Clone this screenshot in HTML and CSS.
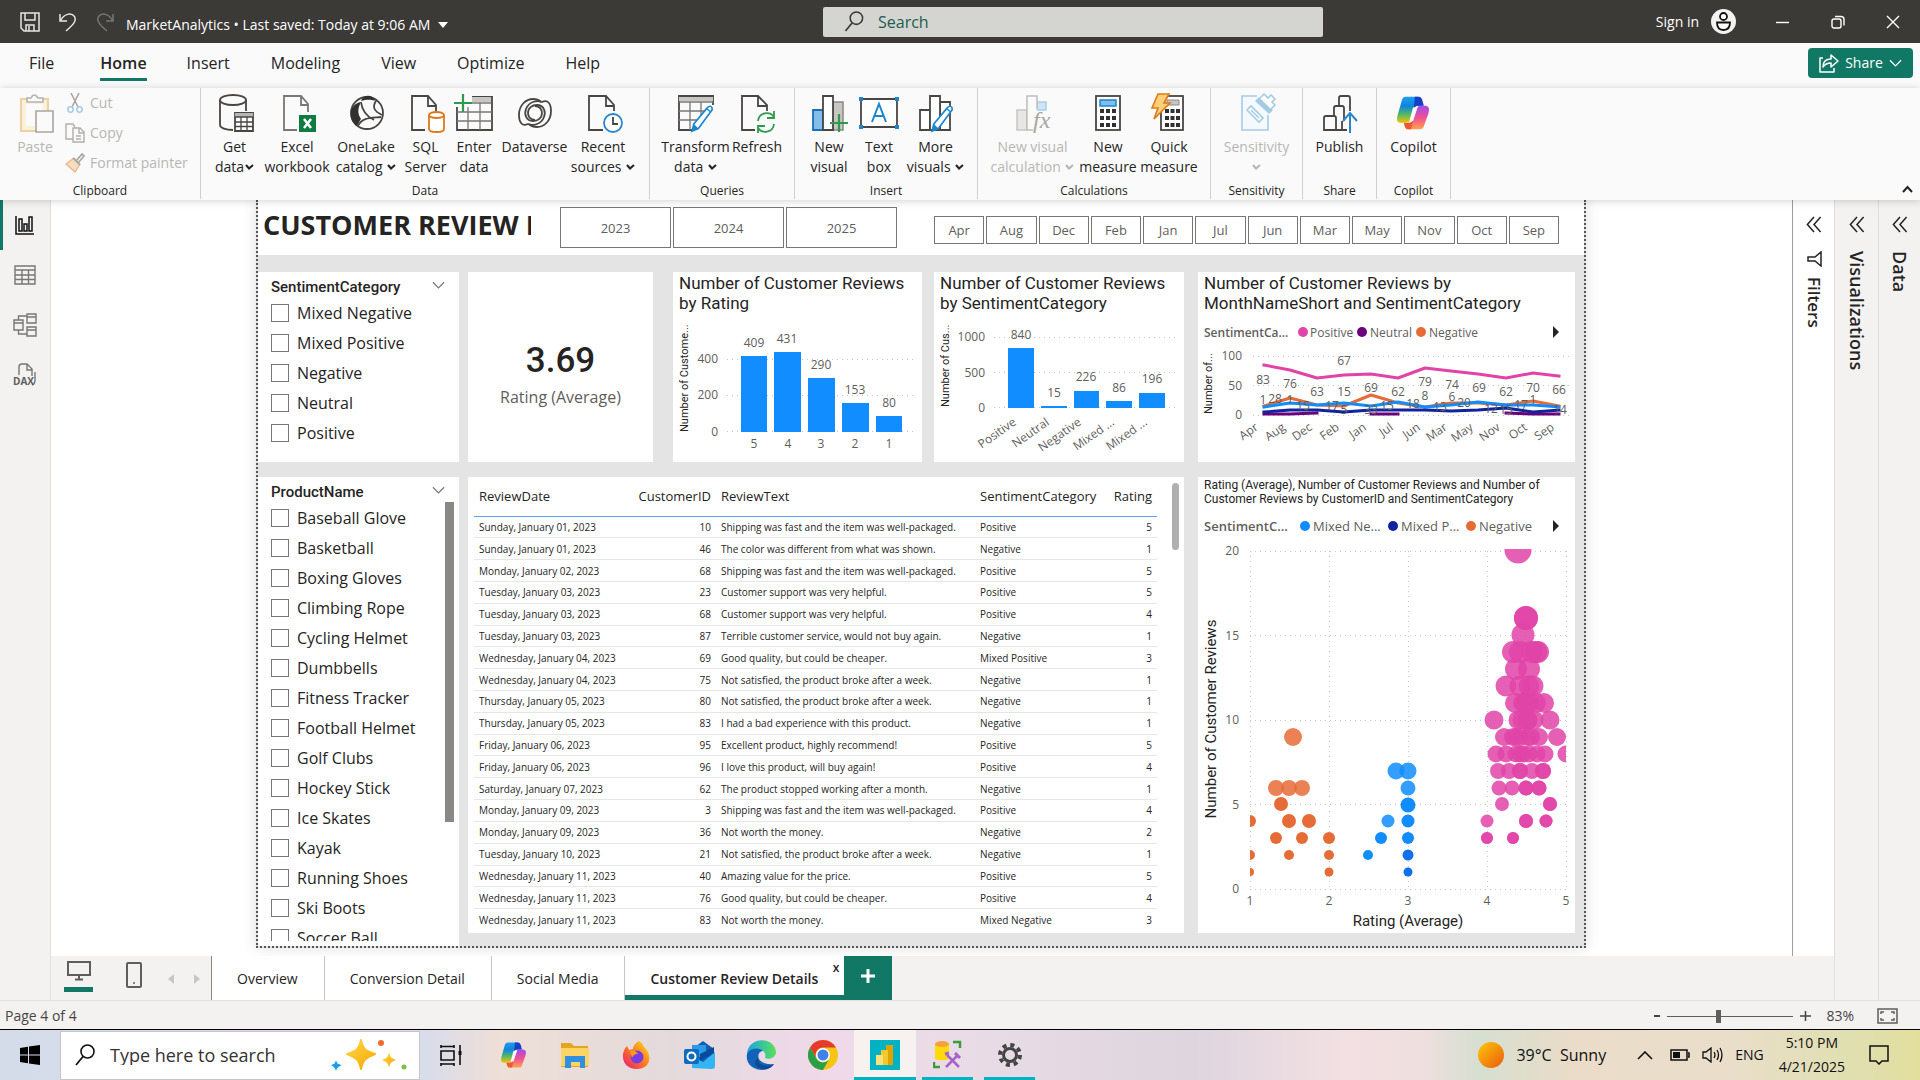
FILE: index.html
```html
<!DOCTYPE html>
<html lang="en">
<head>
<meta charset="utf-8">
<title>MarketAnalytics - Power BI Desktop</title>
<link rel="stylesheet" href="styles.css">
</head>
<body>
<svg class="defs" aria-hidden="true">
  <defs>
    <linearGradient id="cpA" x1="0" y1="0" x2="0" y2="1"><stop offset="0" stop-color="#1ba0ee"/><stop offset=".35" stop-color="#1183e0"/><stop offset=".65" stop-color="#4bb56c"/><stop offset="1" stop-color="#f5c40a"/></linearGradient>
    <linearGradient id="cpB" x1="0" y1="0" x2="0" y2="1"><stop offset="0" stop-color="#a24bee"/><stop offset=".5" stop-color="#ee5093"/><stop offset="1" stop-color="#ffa24d"/></linearGradient>
    <linearGradient id="sunG" x1="0" y1="0" x2="1" y2="1"><stop offset="0" stop-color="#ffc80a"/><stop offset="1" stop-color="#ea5a0c"/></linearGradient>
    <linearGradient id="foxG" x1="1" y1="0" x2="0" y2="1"><stop offset="0" stop-color="#ffe226"/><stop offset=".5" stop-color="#ff7a1c"/><stop offset="1" stop-color="#e6127e"/></linearGradient>
    <linearGradient id="edgeG" x1="0" y1="0" x2="1" y2="0"><stop offset="0" stop-color="#1aa5e3"/><stop offset="1" stop-color="#5be05a"/></linearGradient>
    <linearGradient id="starG" x1="0" y1="0" x2="1" y2="1"><stop offset="0" stop-color="#ffd84a"/><stop offset="1" stop-color="#f5a800"/></linearGradient>
    <symbol id="copilot" viewBox="0 0 40 40">
      <path d="M12 2h13c3 0 4 2 5 6l1 4h-5c-4 0-5 2-6 6l-2 7c-1 4-2 6-6 6H7c-4 0-6-2-4-9l4-14c1-4 2-6 5-6z" fill="url(#cpA)"/>
      <path d="M22 2h4c3 0 4 2 5 6l1 4h-6c-3 0-4 1-5 3z" fill="#1540c4"/>
      <path d="M28 38H15c-3 0-4-2-5-7h5c4 0 5-3 6-6l3-9c1-3 2-4 5-4h4c4 0 6 2 4 9l-4 11c-1 4-2 6-5 6z" fill="url(#cpB)"/>
      <path d="M18 38h-3c-3 0-4-2-5-7h5c2 0 4-1 5-3z" fill="#ee5a30"/>
      <path d="M20 14l-4 15h4l5-15z" fill="#fafafa"/>
    </symbol>
    <symbol id="caret" viewBox="0 0 9 6"><path d="M1 1l3 3.500L8 1" fill="none" stroke="currentColor" stroke-width="2"/></symbol>
    <symbol id="chev" viewBox="0 0 14 9"><path d="M1 1l6 6 6-6" fill="none" stroke="currentColor" stroke-width="1.300"/></symbol>
    <symbol id="collapse" viewBox="0 0 16 18"><path d="M8 1L1 9l7 8M15 1L8 9l7 8" fill="none" stroke="currentColor" stroke-width="1.600"/></symbol>
    <symbol id="pencil" viewBox="0 0 26 32"><path d="M2 30l2-8L19 4q3-3 5 0 1 2-1 4L9 27z" fill="#fff" stroke="#1a86d0" stroke-width="1.800"/><path d="M2 30l2-8 5 5z" fill="#1a86d0"/><path d="M18 5l5 4" stroke="#1a86d0" stroke-width="1.500"/></symbol>
    <symbol id="lens" viewBox="0 0 20 22"><circle cx="12.500" cy="7.500" r="6.500" fill="none" stroke="currentColor" stroke-width="1.600"/><path d="M8 12.500L1 21" stroke="currentColor" stroke-width="1.800"/></symbol>
  </defs>
</svg>

<header class="titlebar">
  <div class="quick">
    <button aria-label="Save"><svg width="20" height="20" viewBox="0 0 20 20"><path d="M1 1h18v18H4l-3-3zM5 1v7h10V1M6 19v-6h8v6M9 14v5" class="ln"/></svg></button>
    <button aria-label="Undo"><svg width="18" height="20" viewBox="0 0 18 20"><path d="M1 2v7h7M1.500 8.500C5 2 12 0 15.500 4.500 18 9 14 13 7 19" class="ln"/></svg></button>
    <button aria-label="Redo" class="dim"><svg width="18" height="20" viewBox="0 0 18 20"><path d="M17 2v7h-7M16.500 8.500C13 2 6 0 2.500 4.500 0 9 4 13 11 19" class="ln"/></svg></button>
  </div>
  <button class="doc">MarketAnalytics • Last saved: Today at 9:06 AM <svg width="10" height="6" viewBox="0 0 10 6"><path d="M0 0h10L5 6z" fill="#fff"/></svg></button>
  <label class="search"><svg width="22" height="21"><use href="#lens"/></svg><input type="text" placeholder="Search" aria-label="Search"></label>
  <div class="account">
    <button>Sign in</button>
    <svg width="25" height="25" viewBox="0 0 25 25"><circle cx="12.500" cy="12.500" r="12.500" fill="#f3f2f1"/><circle cx="12.500" cy="7.500" r="3.500" class="av"/><path d="M6 13.500h13q0 7.500-6.500 7.500T6 13.500z" class="av"/></svg>
  </div>
  <div class="wincontrols">
    <button aria-label="Minimize"><svg width="14" height="14"><path d="M0 7.500h13" class="wc"/></svg></button>
    <button aria-label="Restore"><svg width="14" height="14" viewBox="0 0 14 14"><rect x="1" y="4" width="9" height="9" rx="2" class="wc"/><path d="M4 1.500h6q3 0 3 3v6" class="wc"/></svg></button>
    <button aria-label="Close"><svg width="14" height="14"><path d="M1 1l12 12M13 1L1 13" class="wc"/></svg></button>
  </div>
</header>

<nav class="menu">
  <a href="#">File</a><a href="#" class="on">Home</a><a href="#">Insert</a><a href="#">Modeling</a><a href="#">View</a><a href="#">Optimize</a><a href="#">Help</a>
  <button class="share"><svg width="20" height="20" viewBox="0 0 20 20"><path d="M4 5H1v14h14v-4M4 14c0-6 3-8 8-8V2l7 6-7 6v-4c-4 0-6 1-8 4z" fill="none" stroke="#fff" stroke-width="1.500" stroke-linejoin="round"/></svg>Share<svg width="13" height="9"><use href="#chev"/></svg></button>
</nav>

<section class="ribbon">
  <div class="group clip">
    <div class="tools">
      <button class="tool dis"><svg width="40" height="40" viewBox="0 0 40 40"><path d="M6 6h27v32H6z" fill="#fbf0d8" stroke="#eed0a5" stroke-width="2"/><path d="M11 11h17v22H11z" fill="#fafafa"/><path d="M12 9V5h4q3-6 7 0h5v4z" fill="#fafafa" stroke="#b5b3b1" stroke-width="1.600"/><path d="M21 18h17v21H21z" fill="#fafafa" stroke="#a8a6a4" stroke-width="1.600"/></svg><span>Paste</span></button>
      <div class="cliplist">
        <button class="mini"><svg width="20" height="20" viewBox="0 0 20 20"><path d="M6 0l7 14M14 0L7 14" stroke="#a5a3a1" stroke-width="1.500"/><circle cx="5.500" cy="16.500" r="2.700" class="sc"/><circle cx="14.500" cy="16.500" r="2.700" class="sc"/></svg>Cut</button>
        <button class="mini"><svg width="20" height="20" viewBox="0 0 20 20"><path d="M8 16H1V1h7l2 3M8 5h7l4 4v10H8zM14 5v5h5M11 13h5M11 16h5" fill="none" stroke="#b0aeac" stroke-width="1.400"/></svg>Copy</button>
        <button class="mini"><svg width="20" height="20" viewBox="0 0 20 20"><path d="M1 11l8-6 6 6-5 8z" fill="#f8dcc0" stroke="#e9b48a" stroke-width="1.300"/><path d="M8 5l7 7M11 8l6-7 2 2-6 7" fill="none" stroke="#a5a3a1" stroke-width="1.600"/></svg>Format painter</button>
      </div>
    </div>
    <h2>Clipboard</h2>
  </div>

  <div class="group data">
    <div class="tools">
      <button class="tool"><svg width="40" height="40" viewBox="0 0 40 40"><path d="M5 7v25c0 3 6 5 13 5M31 18V7" class="ic"/><ellipse cx="18" cy="7" rx="13" ry="5" class="ic"/><path d="M20 20h18v18H20z" fill="#fff" class="ic"/><path d="M20 20h18v4H20z" fill="#b8b6b4"/><path d="M20 24h18M20 29h18M20 33.500h18M26 24v14M32 24v14" class="ic thin"/></svg><span>Get<br>data<svg class="ct"><use href="#caret"/></svg></span></button>
      <button class="tool"><svg width="40" height="40" viewBox="0 0 40 40"><path d="M20 37H7V3h17l7 8v8M24 3v9h7" class="ic lt"/><rect x="22" y="22" width="17" height="17" fill="#107c41"/><path d="M27 26l7 9M34 26l-7 9" stroke="#fff" stroke-width="2.500"/></svg><span>Excel<br>workbook</span></button>
      <button class="tool"><svg width="40" height="40" viewBox="0 0 40 40"><circle cx="21" cy="20" r="16" class="ic"/><path d="M15 9C2 11 2 28 11 33c2-3 3-6 4-7-4-6-3-11 0-17zM15 8c2-7 12-7 14 0-6-2-9-1-14 0z" fill="#323130"/><path d="M15 9c1 9 5 14 13 18M30 8c-4 6-2 10 6 14M12 33c4-9 13-8 23-9" class="ic"/></svg><span>OneLake<br>catalog <svg class="ct"><use href="#caret"/></svg></span></button>
      <button class="tool"><svg width="40" height="40" viewBox="0 0 40 40"><path d="M19 37H6V3h16l8 9v6M22 3v10h8" class="ic"/><path d="M23 22v14c0 4 15 4 15 0V22" fill="#fff" stroke="#e07818" stroke-width="1.800"/><ellipse cx="30.500" cy="22" rx="7.500" ry="3" fill="#fff" stroke="#e07818" stroke-width="1.800"/></svg><span>SQL<br>Server</span></button>
      <button class="tool"><svg width="40" height="40" viewBox="0 0 40 40"><path d="M18 4h20v33H3V14" class="ic"/><path d="M18 4h19v5H18z" fill="#c8c6c4"/><path d="M18 10h19M3 19h35M3 28h35M14 14v23M26 10v27" class="ic lt thin"/><path d="M9 1v18M0 10h18" stroke="#2e9a4a" stroke-width="2.200"/></svg><span>Enter<br>data</span></button>
      <button class="tool"><svg width="40" height="40" viewBox="0 0 40 40"><path d="M20 27c-5 0-7-4-7-7 0-5 4-8 9-8 7 0 9 7 7 12-3 8-12 9-16 7-6 3-9-2-9-9C4 12 11 6 18 6c5 0 7 2 8 3" class="ic"/><path d="M20 13c5 0 7 4 7 7 0 5-4 8-9 8-7 0-9-7-7-12 3-8 12-9 16-7 6-3 9 2 9 9 0 10-7 16-14 16-5 0-7-2-8-3" class="ic"/></svg><span>Dataverse</span></button>
      <button class="tool"><svg width="40" height="40" viewBox="0 0 40 40"><path d="M20 37H6V3h17l8 9v6M23 3v10h8" class="ic"/><circle cx="30" cy="30" r="9" fill="#fff" stroke="#2a86c8" stroke-width="1.800"/><path d="M30 24v7h5" class="ic"/></svg><span>Recent<br>sources <svg class="ct"><use href="#caret"/></svg></span></button>
    </div>
    <h2>Data</h2>
  </div>

  <div class="group queries">
    <div class="tools">
      <button class="tool"><svg width="40" height="40" viewBox="0 0 40 40"><path d="M37 12V3H3v34h16" class="ic"/><path d="M3 4h34v4H3z" fill="#c8c6c4"/><path d="M3 9h34M3 18h28M3 27h20M14 9v28M25 9v14" class="ic lt thin"/><svg x="13" y="11" width="26" height="29"><use href="#pencil"/></svg></svg><span>Transform<br>data <svg class="ct"><use href="#caret"/></svg></span></button>
      <button class="tool"><svg width="40" height="40" viewBox="0 0 40 40"><path d="M18 37H5V3h16l9 9v6M21 3v10h9" class="ic"/><path d="M21 28c1-9 12-10 16-4M37 18v7h-7M37 31c-1 9-12 10-16 4M21 40v-7h7" fill="none" stroke="#2e9a4a" stroke-width="1.800"/></svg><span>Refresh</span></button>
    </div>
    <h2>Queries</h2>
  </div>

  <div class="group insert">
    <div class="tools">
      <button class="tool"><svg width="40" height="40" viewBox="0 0 40 40"><path d="M4 17h10v20H4z" fill="#83bdec" stroke="#1a6fb5" stroke-width="1.800"/><path d="M24 9h10v28H24z" fill="#c8c6c4" stroke="#8a8886" stroke-width="1.500"/><path d="M14 3h10v34H14z" fill="#fff" class="ic"/><path d="M30 21v18M21 30h18" stroke="#2e9a4a" stroke-width="2.200"/></svg><span>New<br>visual</span></button>
      <button class="tool"><svg width="40" height="40" viewBox="0 0 40 40"><path d="M2 6h36v28H2z" fill="#fff" class="ic"/><path d="M0 4h4v4H0zM36 4h4v4h-4zM0 32h4v4H0zM36 32h4v4h-4z" fill="#1a86d0"/><path d="M13 29l7-18 7 18M15.500 23h9" fill="none" stroke="#1a86d0" stroke-width="2"/></svg><span>Text<br>box</span></button>
      <button class="tool"><svg width="40" height="40" viewBox="0 0 40 40"><path d="M4 17h10v20H4zM24 9h10v28H24z" fill="#fff" class="ic"/><path d="M14 3h10v34H14z" fill="#fff" class="ic"/><svg x="13" y="11" width="26" height="29"><use href="#pencil"/></svg></svg><span>More<br>visuals <svg class="ct"><use href="#caret"/></svg></span></button>
    </div>
    <h2>Insert</h2>
  </div>

  <div class="group calc">
    <div class="tools">
      <button class="tool dis"><svg width="40" height="40" viewBox="0 0 40 40"><path d="M4 17h10v20H4z" fill="#e8e6e4" stroke="#c8c6c4" stroke-width="1.500"/><path d="M24 9h9v8h-9z" fill="#cfe4f6" stroke="#a8cdea" stroke-width="1.500"/><path d="M24 16V3H14v34h6" fill="#fafafa" stroke="#c0bebc" stroke-width="1.500"/><text x="20" y="35" class="fx">fx</text></svg><span>New visual<br>calculation <svg class="ct"><use href="#caret"/></svg></span></button>
      <button class="tool"><svg width="40" height="40" viewBox="0 0 40 40"><rect x="8" y="3" width="24" height="34" fill="#fff" class="ic"/><path d="M12 7h16v6H12z" fill="#83bdec" stroke="#1a86d0" stroke-width="1.500"/><path d="M12 18h16M12 25h16M12 32h16" stroke="#323130" stroke-width="4" stroke-dasharray="4 2"/></svg><span>New<br>measure</span></button>
      <button class="tool"><svg width="40" height="40" viewBox="0 0 40 40"><rect x="12" y="3" width="22" height="34" fill="#fff" class="ic"/><path d="M18 7h12v5H18z" fill="#c8c6c4" stroke="#8a8886"/><path d="M16 18h15M16 25h15M16 32h15" stroke="#323130" stroke-width="4" stroke-dasharray="4 1.500"/><path d="M9 1h11l-5 9h6L5 26l4-11H3z" fill="#fcd078" stroke="#e07818" stroke-width="1.600"/></svg><span>Quick<br>measure</span></button>
    </div>
    <h2>Calculations</h2>
  </div>

  <div class="group sens">
    <div class="tools">
      <button class="tool dis"><svg width="40" height="40" viewBox="0 0 40 40"><path d="M20 3H5v34h26V22" fill="#f4f9fd" stroke="#a5cbe4" stroke-width="1.600"/><path d="M10 17l4-4 12 12-4 4zM14 17l8 8" fill="#fff" stroke="#a5cbe4" stroke-width="1.600"/><path d="M18 8l4-4 14 13-4 4z" fill="#a5cbe4"/><path d="M23 5l4-4 4 4 3-3 4 4-3 3 3 3-4 4" fill="#fff" stroke="#a5cbe4" stroke-width="1.600"/></svg><span>Sensitivity<br><svg class="ct"><use href="#caret"/></svg></span></button>
    </div>
    <h2>Sensitivity</h2>
  </div>
  <div class="group pub">
    <div class="tools">
      <button class="tool"><svg width="40" height="40" viewBox="0 0 40 40"><path d="M30 18V5q0-2-2-2h-7q-2 0-2 2v8M24 28V15q0-2-2-2h-6q-2 0-2 2v8M4 37V25q0-2 2-2h8q2 0 2 2v12zM4 37h23M22 37v-9" class="ic"/><path d="M30 40V21M23 28l7-8 7 8" fill="none" stroke="#2a86c8" stroke-width="2"/></svg><span>Publish</span></button>
    </div>
    <h2>Share</h2>
  </div>
  <div class="group pub">
    <div class="tools"><button class="tool"><svg width="40" height="40" viewBox="0 0 40 40"><svg x="0" y="2" width="38" height="36"><use href="#copilot"/></svg></svg><span>Copilot</span></button></div>
    <h2>Copilot</h2>
  </div>
  <button class="fold" aria-label="Collapse ribbon"><svg width="11" height="8" viewBox="0 0 11 8"><path d="M1 7l4.500-5L10 7" fill="none" stroke="#222" stroke-width="2"/></svg></button>
</section>

<main class="work">
  <nav class="rail">
    <button class="on" aria-label="Report view"><svg width="20" height="20" viewBox="0 0 20 20"><path d="M1 1v18h18M4 4h3v12H4zM9 9h3v7H9zM14 2h3v14h-3z" fill="none" stroke="#111" stroke-width="1.500"/></svg></button>
    <button aria-label="Table view"><svg width="22" height="20" viewBox="0 0 22 20"><path d="M1 1h20v18H1zM1 5h20M1 10h20M1 14.500h20M8 5v14M14.500 5v14" class="rl"/></svg></button>
    <button aria-label="Model view"><svg width="24" height="24" viewBox="0 0 24 24"><path d="M1 7h9v10H1zM1 10h9M14 1h9v9h-9zM14 4h9M14 14h9v9h-9zM14 17h9M5.500 7V3H14M5.500 17v4H14" class="rl"/></svg></button>
    <button aria-label="DAX query view"><svg width="24" height="24" viewBox="0 0 24 24"><path d="M6 12V4q0-3 3-3h5l5 5v7M14 1v6h5M22 9v8q0 4-3 5" class="rl"/><text x="0" y="22" class="dax">DAX</text></svg></button>
  </nav>

  <div class="center">
    <div class="stage">
      <section class="canvas">
        <article class="page">
          <header class="pagehead">
            <h1>CUSTOMER REVIEW DETAILS</h1>
            <div class="years"><button>2023</button><button>2024</button><button>2025</button></div>
            <div class="months"><button>Apr</button><button>Aug</button><button>Dec</button><button>Feb</button><button>Jan</button><button>Jul</button><button>Jun</button><button>Mar</button><button>May</button><button>Nov</button><button>Oct</button><button>Sep</button></div>
          </header>
          <div class="grid">
            <div class="col first">
              <section class="card slicer top">
                <h3>SentimentCategory<svg width="13" height="9"><use href="#chev"/></svg></h3>
                <div class="items">
                  <label><input type="checkbox">Mixed Negative</label>
                  <label><input type="checkbox">Mixed Positive</label>
                  <label><input type="checkbox">Negative</label>
                  <label><input type="checkbox">Neutral</label>
                  <label><input type="checkbox">Positive</label>
                </div>
              </section>
              <section class="card slicer rest">
                <h3>ProductName<svg width="13" height="9"><use href="#chev"/></svg></h3>
                <div class="scroll">
                  <div class="items">
                    <label><input type="checkbox">Baseball Glove</label>
                    <label><input type="checkbox">Basketball</label>
                    <label><input type="checkbox">Boxing Gloves</label>
                    <label><input type="checkbox">Climbing Rope</label>
                    <label><input type="checkbox">Cycling Helmet</label>
                    <label><input type="checkbox">Dumbbells</label>
                    <label><input type="checkbox">Fitness Tracker</label>
                    <label><input type="checkbox">Football Helmet</label>
                    <label><input type="checkbox">Golf Clubs</label>
                    <label><input type="checkbox">Hockey Stick</label>
                    <label><input type="checkbox">Ice Skates</label>
                    <label><input type="checkbox">Kayak</label>
                    <label><input type="checkbox">Running Shoes</label>
                    <label><input type="checkbox">Ski Boots</label>
                    <label><input type="checkbox">Soccer Ball</label>
                  </div>
                  <div class="thumb"></div>
                </div>
              </section>
            </div>

            <div class="col mid">
              <div class="toprow">
                <section class="card kpi"><strong>3.69</strong><span>Rating (Average)</span></section>
                <section class="card">
                  <h4>Number of Customer Reviews<br>by Rating</h4>
                  <svg class="chart" viewBox="0 45 249 145">
                    <path d="M54 87.500h190M54 123.500h190M54 159.500h190" class="gl"/>
                    <g class="bar"><path d="M68 84h26v76H68z"/><path d="M101 80h27v80h-27z"/><path d="M135 106h27v54h-27z"/><path d="M169 131h27v29h-27z"/><path d="M203 144h26v16h-26z"/></g>
                    <g class="tk end"><text x="45" y="91">400</text><text x="45" y="127">200</text><text x="45" y="164">0</text></g>
                    <g class="tk mdl"><text x="81" y="75">409</text><text x="114" y="71">431</text><text x="148" y="97">290</text><text x="182" y="122">153</text><text x="216" y="135">80</text>
                    <text x="81" y="176">5</text><text x="115" y="176">4</text><text x="148" y="176">3</text><text x="182" y="176">2</text><text x="216" y="176">1</text></g>
                    <text class="at sm" transform="translate(15 160) rotate(-90)">Number of Custome...</text>
                  </svg>
                </section>
                <section class="card">
                  <h4>Number of Customer Reviews<br>by SentimentCategory</h4>
                  <svg class="chart" viewBox="0 45 250 145">
                    <path d="M60 65.500h184M60 100.500h184M60 135.500h184" class="gl"/>
                    <g class="bar"><path d="M74 76h26v60H74z"/><path d="M107 134h26v2h-26z"/><path d="M140 119h25v17h-25z"/><path d="M172 129h26v7h-26z"/><path d="M205 121h26v15h-26z"/></g>
                    <g class="tk end"><text x="51" y="69">1000</text><text x="51" y="105">500</text><text x="51" y="140">0</text></g>
                    <g class="tk mdl"><text x="87" y="67">840</text><text x="120" y="125">15</text><text x="152" y="109">226</text><text x="185" y="120">86</text><text x="218" y="111">196</text></g>
                    <g class="tk end"><text transform="translate(83 152) rotate(-35)">Positive</text><text transform="translate(116 152) rotate(-35)">Neutral</text><text transform="translate(148 152) rotate(-35)">Negative</text><text transform="translate(181 152) rotate(-35)">Mixed ...</text><text transform="translate(214 152) rotate(-35)">Mixed ...</text></g>
                    <text class="at sm" transform="translate(15 135) rotate(-90)">Number of Cus...</text>
                  </svg>
                </section>
              </div>
              <section class="card tablecard">
                <table>
                  <thead><tr><th>ReviewDate</th><th class="n">CustomerID</th><th>ReviewText</th><th>SentimentCategory</th><th class="n">Rating</th></tr></thead>
                  <tbody>
                    <tr><td>Sunday, January 01, 2023</td><td>10</td><td>Shipping was fast and the item was well-packaged.</td><td>Positive</td><td>5</td></tr>
                    <tr><td>Sunday, January 01, 2023</td><td>46</td><td>The color was different from what was shown.</td><td>Negative</td><td>1</td></tr>
                    <tr><td>Monday, January 02, 2023</td><td>68</td><td>Shipping was fast and the item was well-packaged.</td><td>Positive</td><td>5</td></tr>
                    <tr><td>Tuesday, January 03, 2023</td><td>23</td><td>Customer support was very helpful.</td><td>Positive</td><td>5</td></tr>
                    <tr><td>Tuesday, January 03, 2023</td><td>68</td><td>Customer support was very helpful.</td><td>Positive</td><td>4</td></tr>
                    <tr><td>Tuesday, January 03, 2023</td><td>87</td><td>Terrible customer service, would not buy again.</td><td>Negative</td><td>1</td></tr>
                    <tr><td>Wednesday, January 04, 2023</td><td>69</td><td>Good quality, but could be cheaper.</td><td>Mixed Positive</td><td>3</td></tr>
                    <tr><td>Wednesday, January 04, 2023</td><td>75</td><td>Not satisfied, the product broke after a week.</td><td>Negative</td><td>1</td></tr>
                    <tr><td>Thursday, January 05, 2023</td><td>80</td><td>Not satisfied, the product broke after a week.</td><td>Negative</td><td>1</td></tr>
                    <tr><td>Thursday, January 05, 2023</td><td>83</td><td>I had a bad experience with this product.</td><td>Negative</td><td>1</td></tr>
                    <tr><td>Friday, January 06, 2023</td><td>95</td><td>Excellent product, highly recommend!</td><td>Positive</td><td>5</td></tr>
                    <tr><td>Friday, January 06, 2023</td><td>96</td><td>I love this product, will buy again!</td><td>Positive</td><td>4</td></tr>
                    <tr><td>Saturday, January 07, 2023</td><td>62</td><td>The product stopped working after a month.</td><td>Negative</td><td>1</td></tr>
                    <tr><td>Monday, January 09, 2023</td><td>3</td><td>Shipping was fast and the item was well-packaged.</td><td>Positive</td><td>4</td></tr>
                    <tr><td>Monday, January 09, 2023</td><td>36</td><td>Not worth the money.</td><td>Negative</td><td>2</td></tr>
                    <tr><td>Tuesday, January 10, 2023</td><td>21</td><td>Not satisfied, the product broke after a week.</td><td>Negative</td><td>1</td></tr>
                    <tr><td>Wednesday, January 11, 2023</td><td>40</td><td>Amazing value for the price.</td><td>Positive</td><td>5</td></tr>
                    <tr><td>Wednesday, January 11, 2023</td><td>76</td><td>Good quality, but could be cheaper.</td><td>Positive</td><td>4</td></tr>
                    <tr><td>Wednesday, January 11, 2023</td><td>83</td><td>Not worth the money.</td><td>Mixed Negative</td><td>3</td></tr>
                  </tbody>
                </table>
                <div class="tthumb"></div>
              </section>
            </div>

            <div class="col last">
              <section class="card top">
                <h4>Number of Customer Reviews by<br>MonthNameShort and SentimentCategory</h4>
                <svg class="chart" viewBox="0 45 377 145">
                  <g class="tk"><text x="6" y="65" class="lb">SentimentCa...</text><circle cx="105" cy="60" r="5" fill="#e044a7"/><text x="112" y="65">Positive</text><circle cx="164" cy="60" r="5" fill="#6b007b"/><text x="172" y="65">Neutral</text><circle cx="223" cy="60" r="5" fill="#e66c37"/><text x="231" y="65">Negative</text></g>
                  <path d="M355 54l6 6-6 6z" fill="#252423"/>
                  <path d="M55 84.500h318M55 113.500h318M55 143.500h318" class="gl"/>
                  <g fill="none" stroke-width="3" stroke-linejoin="round" stroke-linecap="square">
                    <path d="M66 142h26l27-1M173 142h27M308 141l27 1h26" stroke="#6b007b"/>
                    <path d="M66 134l26-8 27 7 27 1 27-11 27 8 27 4 26-4h27l28 2 27-4 26 5" stroke="#e66c37"/>
                    <path d="M66 135l26-4 27 2 27-2 27 3 27-4 27 5 26-2 27-3 28 3h27l26 2" stroke="#118dff"/>
                    <path d="M66 140l26-2h27l27 2 27-2h27 27l26 1 27-1 28-2 27 4 26-2" stroke="#12239e"/>
                    <path d="M66 93l26 5 27 8 27-3 27-1 27 4 27-10 26 3 27 3 28 4 27-5 26 3" stroke="#e044a7"/>
                  </g>
                  <g class="tk end"><text x="44" y="88">100</text><text x="44" y="118">50</text><text x="44" y="147">0</text></g>
                  <g class="tk mdl"><text x="65" y="112">83</text><text x="92" y="116">76</text><text x="119" y="124">63</text><text x="146" y="93">67</text><text x="146" y="124">15</text><text x="173" y="120">69</text><text x="200" y="124">62</text><text x="227" y="114">79</text><text x="227" y="128">8</text><text x="254" y="117">74</text><text x="254" y="129">6</text><text x="281" y="120">69</text><text x="308" y="124">62</text><text x="335" y="120">70</text><text x="361" y="122">66</text>
                  <text x="65" y="132">1</text><text x="77" y="131">28</text><text x="92" y="132">1</text><text x="105" y="138">15</text><text x="134" y="138">17</text><text x="146" y="142">5</text><text x="173" y="142">33</text><text x="189" y="138">15</text><text x="215" y="136">18</text><text x="242" y="139">13</text><text x="266" y="135">20</text><text x="293" y="141">12</text><text x="308" y="142">15</text><text x="323" y="137">17</text><text x="335" y="132">1</text><text x="362" y="142">14</text></g>
                  <g class="tk end"><text transform="translate(61 157) rotate(-35)">Apr</text><text transform="translate(88 157) rotate(-35)">Aug</text><text transform="translate(115 157) rotate(-35)">Dec</text><text transform="translate(142 157) rotate(-35)">Feb</text><text transform="translate(169 157) rotate(-35)">Jan</text><text transform="translate(196 157) rotate(-35)">Jul</text><text transform="translate(223 157) rotate(-35)">Jun</text><text transform="translate(250 157) rotate(-35)">Mar</text><text transform="translate(276 157) rotate(-35)">May</text><text transform="translate(303 157) rotate(-35)">Nov</text><text transform="translate(330 157) rotate(-35)">Oct</text><text transform="translate(357 157) rotate(-35)">Sep</text></g>
                  <text class="at sm" transform="translate(14 142) rotate(-90)">Number of...</text>
                </svg>
              </section>
              <section class="card scatter">
                <h5>Rating (Average), Number of Customer Reviews and Number of<br>Customer Reviews by CustomerID and SentimentCategory</h5>
                <svg class="chart" viewBox="0 30 377 426">
                  <defs><clipPath id="plot"><path d="M52 72h316v345H52z"/></clipPath></defs>
                  <g class="lg"><text x="6" y="54" class="lb">SentimentC...</text><circle cx="107" cy="49" r="5" fill="#118dff"/><text x="115" y="54">Mixed Ne...</text><circle cx="195" cy="49" r="5" fill="#12239e"/><text x="203" y="54">Mixed P...</text><circle cx="273" cy="49" r="5" fill="#e66c37"/><text x="281" y="54">Negative</text></g>
                  <path d="M355 43l6 6-6 6z" fill="#252423"/>
                  <path d="M52 74.500h316M52 158.500h316M52 243.500h316M52 327.500h316M52 412.500h316M52.500 74v338M131.500 74v338M210.500 74v338M289.500 74v338M368.500 74v338" class="gl"/>
                  <g clip-path="url(#plot)" fill-opacity=".85">
                    <g fill="#e66c37">
                      <circle cx="95" cy="260" r="9"/><circle cx="78" cy="311" r="8"/><circle cx="91" cy="311" r="8"/><circle cx="104" cy="311" r="8"/>
                      <g fill-opacity="1"><circle cx="83" cy="327" r="7"/><circle cx="52" cy="344" r="6"/><circle cx="91" cy="344" r="7"/><circle cx="111" cy="344" r="7"/><circle cx="78" cy="361" r="6"/><circle cx="104" cy="361" r="6"/><circle cx="131" cy="361" r="6"/><circle cx="52" cy="378" r="5"/><circle cx="91" cy="378" r="5"/><circle cx="131" cy="378" r="5"/><circle cx="52" cy="395" r="4"/><circle cx="131" cy="395" r="4.500"/></g>
                    </g>
                    <g fill="#118dff">
                      <circle cx="198" cy="294" r="8.500"/><circle cx="210" cy="294" r="8.500"/><circle cx="210" cy="311" r="7.500"/><circle cx="190" cy="344" r="6.500"/>
                      <g fill-opacity="1"><circle cx="210" cy="328" r="7.500"/><circle cx="210" cy="344" r="6.500"/><circle cx="183" cy="361" r="6"/><circle cx="210" cy="361" r="6"/><circle cx="170" cy="378" r="5"/></g>
                      <g fill="#1070ec" fill-opacity="1"><circle cx="210" cy="378" r="5.500"/><circle cx="210" cy="395" r="4.500"/></g>
                    </g>
                    <g fill="#e044a7">
                      <circle cx="320" cy="73" r="13.500"/><circle cx="328" cy="141" r="12"/><circle cx="328" cy="141" r="12"/><circle cx="325" cy="158" r="11.500"/>
                      <circle cx="315" cy="175" r="11"/><circle cx="322" cy="175" r="11"/><circle cx="334" cy="175" r="11"/><circle cx="340" cy="175" r="11"/><circle cx="338" cy="175" r="11"/>
                      <circle cx="318" cy="192" r="11"/><circle cx="331" cy="192" r="11"/>
                      <circle cx="308" cy="209" r="10.500"/><circle cx="322" cy="209" r="10.500"/><circle cx="331" cy="209" r="10.500"/><circle cx="335" cy="209" r="10.500"/>
                      <circle cx="317" cy="226" r="10"/><circle cx="325" cy="226" r="10"/><circle cx="328" cy="226" r="10"/><circle cx="331" cy="226" r="10"/><circle cx="338" cy="226" r="10"/><circle cx="346" cy="226" r="10"/>
                      <circle cx="296" cy="243" r="9.500"/><circle cx="320" cy="243" r="9.500"/><circle cx="324" cy="243" r="9.500"/><circle cx="330" cy="243" r="9.500"/><circle cx="330" cy="243" r="9.500"/><circle cx="336" cy="243" r="9.500"/><circle cx="352" cy="243" r="9.500"/>
                      <circle cx="306" cy="260" r="9"/><circle cx="315" cy="260" r="9"/><circle cx="318" cy="260" r="9"/><circle cx="322" cy="260" r="9"/><circle cx="330" cy="260" r="9"/><circle cx="333" cy="260" r="9"/><circle cx="341" cy="260" r="9"/><circle cx="359" cy="260" r="9"/>
                      <circle cx="298" cy="277" r="8.500"/><circle cx="308" cy="277" r="8.500"/><circle cx="318" cy="277" r="8.500"/><circle cx="322" cy="277" r="8.500"/><circle cx="325" cy="277" r="8.500"/><circle cx="331" cy="277" r="8.500"/><circle cx="339" cy="277" r="8.500"/><circle cx="347" cy="277" r="8.500"/><circle cx="368" cy="277" r="8.500"/>
                      <circle cx="300" cy="294" r="8"/><circle cx="311" cy="294" r="8"/><circle cx="322" cy="294" r="8"/><circle cx="322" cy="294" r="8"/><circle cx="334" cy="294" r="8"/><circle cx="345" cy="294" r="8"/><circle cx="345" cy="294" r="8"/>
                      <circle cx="301" cy="311" r="7.500"/><circle cx="314" cy="311" r="7.500"/><circle cx="328" cy="311" r="7.500"/><circle cx="328" cy="311" r="7.500"/><circle cx="341" cy="311" r="7.500"/><circle cx="341" cy="311" r="7.500"/>
                      <circle cx="304" cy="327" r="7"/><circle cx="352" cy="327" r="7"/><circle cx="352" cy="327" r="7"/>
                      <circle cx="289" cy="344" r="6.500"/><circle cx="328" cy="344" r="7"/><circle cx="328" cy="344" r="7"/><circle cx="348" cy="344" r="6.500"/><circle cx="348" cy="344" r="6.500"/>
                      <circle cx="289" cy="361" r="6"/><circle cx="289" cy="361" r="6"/><circle cx="315" cy="361" r="6"/><circle cx="315" cy="361" r="6"/>
                    </g>
                  </g>
                  <g class="tk end"><text x="41" y="78">20</text><text x="41" y="163">15</text><text x="41" y="247">10</text><text x="41" y="332">5</text><text x="41" y="416">0</text></g>
                  <g class="tk mdl"><text x="52" y="428">1</text><text x="131" y="428">2</text><text x="210" y="428">3</text><text x="289" y="428">4</text><text x="368" y="428">5</text></g>
                  <text class="at mdl" x="210" y="449">Rating (Average)</text>
                  <text class="at mdl" transform="translate(18 242) rotate(-90)">Number of Customer Reviews</text>
                </svg>
              </section>
            </div>
          </div>
        </article>
      </section>
      <aside class="pane filters">
        <button aria-label="Expand filters"><svg width="16" height="17"><use href="#collapse"/></svg></button>
        <svg width="16" height="16" viewBox="0 0 16 16"><path d="M15 1v14L9 10H2V6h7z" fill="none" stroke="#252423" stroke-width="1.500"/></svg>
        <h2>Filters</h2>
      </aside>
    </div>
    <nav class="pagetabs">
      <div class="views">
        <button class="on" aria-label="Desktop layout"><svg width="24" height="20" viewBox="0 0 24 20"><path d="M1 1h22v13H1zM12 14v4M8 18.500h8" fill="none" stroke="#605e5c" stroke-width="2"/></svg></button>
        <button aria-label="Mobile layout"><svg width="16" height="26" viewBox="0 0 16 26"><rect x="1" y="1" width="14" height="24" rx="1" fill="none" stroke="#605e5c" stroke-width="2"/><circle cx="8" cy="21" r="1" fill="#605e5c"/></svg></button>
        <button class="arrow" aria-label="Previous page"><svg width="6" height="10"><path d="M6 0v10L0 5z" fill="#c8c6c4"/></svg></button>
        <button class="arrow" aria-label="Next page"><svg width="6" height="10"><path d="M0 0v10l6-5z" fill="#c8c6c4"/></svg></button>
      </div>
      <a href="#">Overview</a><a href="#">Conversion Detail</a><a href="#">Social Media</a><a href="#" class="on">Customer Review Details<span class="x">x</span></a>
      <button class="plus" aria-label="New page"><svg width="14" height="14"><path d="M7 0v14M0 7h14" stroke="#fff" stroke-width="3"/></svg></button>
    </nav>
  </div>
  <aside class="pane gray viz"><button aria-label="Expand visualizations"><svg width="16" height="17"><use href="#collapse"/></svg></button><h2>Visualizations</h2></aside>
  <aside class="pane gray"><button aria-label="Expand data"><svg width="16" height="17"><use href="#collapse"/></svg></button><h2>Data</h2></aside>
</main>

<footer class="status">
  <span>Page 4 of 4</span>
  <div class="zoom"><button aria-label="Zoom out"><svg width="6" height="14"><path d="M0 7h6" stroke="#444" stroke-width="2"/></svg></button><input type="range" min="0" max="100" value="40" aria-label="Zoom"><button aria-label="Zoom in"><svg width="11" height="14"><path d="M0 7h11M5.500 2v10" stroke="#444" stroke-width="1.500"/></svg></button><span class="pct">83%</span><button aria-label="Fit to page"><svg width="21" height="16" viewBox="0 0 21 16"><path d="M1 1h19v14H1zM4 6V4h3M14 4h3v2M17 10v2h-3M7 12H4v-2" fill="none" stroke="#605e5c" stroke-width="1.500"/></svg></button></div>
</footer>

<footer class="taskbar">
  <button class="start" aria-label="Start"><svg width="20" height="20" viewBox="0 0 20 20"><path d="M0 3l8-1.200V9.500H0zM9 1.600L20 0v9.500H9zM0 10.500h8v7.700L0 17zM9 10.500h11V20L9 18.400z" fill="#000"/></svg></button>
  <label class="tsearch"><svg width="20" height="22"><use href="#lens"/></svg><input type="text" placeholder="Type here to search" aria-label="Type here to search">
    <svg width="78" height="32" viewBox="0 0 78 32"><path d="M30 1c2 9 4 11 14 14-10 4-12 6-14 15-2-9-4-11-14-15 10-3 12-5 14-14z" fill="url(#starG)" stroke="url(#starG)" stroke-width="2" stroke-linejoin="round"/><path d="M58 13c1 5 2 6 7 8-5 2-6 3-7 8-1-5-2-6-7-8 5-2 6-3 7-8z" fill="url(#starG)"/><path d="M5 21c1 4 2 4 6 5-4 2-5 3-6 6-1-3-2-4-5-6 3-1 4-1 5-5z" fill="#1a9ff0"/><circle cx="50" cy="4" r="3" fill="#f26b2c"/><circle cx="73" cy="28" r="2.500" fill="#7cc344"/></svg></label>
  <div class="apps">
    <button aria-label="Task view"><svg width="22" height="22" viewBox="0 0 22 22"><path d="M1 4V1M1 2.500h13M14 4V1M1 7h13v9H1zM1 19v3M1 20h13M14 19v3M20 1v20" fill="none" stroke="#111" stroke-width="1.600"/><path d="M18.500 7h3v4h-3z" fill="#111"/></svg></button>
    <button aria-label="Copilot"><svg width="29" height="28"><use href="#copilot"/></svg></button>
    <button aria-label="File Explorer"><svg width="30" height="28" viewBox="0 0 30 28"><path d="M1 2h10l3 3h14v21H1z" fill="#e6a520"/><path d="M1 7h28v18H1z" fill="#fdd566"/><path d="M5 27V15h20v12h-5v-6h-9v6z" fill="#2f8fe0"/></svg></button>
    <button aria-label="Firefox"><svg width="30" height="30" viewBox="0 0 30 30"><path d="M17 1c4 2 4 5 6 7 8 8 5 21-8 21C5 29 0 22 1 14c1-4 2-6 4-8l2 4 4-1c0-3 2-6 6-8z" fill="url(#foxG)"/><circle cx="15" cy="17" r="6.500" fill="#7a3be0"/><path d="M8 11c5-1 7 1 8 3-4 0-5 2-6 4z" fill="#ff9a1c"/></svg></button>
    <button aria-label="Outlook"><svg width="31" height="28" viewBox="0 0 31 28"><path d="M8 8L19 0l11 8v16H8z" fill="#0f5fb8"/><path d="M8 4h14v12H8z" fill="#2a9be8"/><path d="M8 27V14l11 7 12-10v14q0 3-3 3z" fill="#34b4f2"/><path d="M16 13l14-7v6L16 20z" fill="#0a4a9a"/><rect y="8" width="15" height="15" rx="2" fill="#0f6cbd"/><circle cx="7.500" cy="15.500" r="4" fill="none" stroke="#fff" stroke-width="2"/></svg></button>
    <button aria-label="Edge"><svg width="31" height="30" viewBox="0 0 31 30"><path d="M1 14C2-4 29-4 30 12c0 6-7 8-11 6 2-6-3-9-8-8S2 13 1 19z" fill="url(#edgeG)"/><path d="M1 14c3-6 12-7 16-3-7 0-8 15 11 13-5 7-14 7-20 4C2 25 0 19 1 14z" fill="#1263b8"/><path d="M12 18c0 8 8 9 16 6-5 7-12 6-17 3-3-3-2-7 1-9z" fill="#0c4a94"/></svg></button>
    <button aria-label="Chrome"><svg width="30" height="30" viewBox="0 0 30 30"><circle cx="15" cy="15" r="15" fill="#f9c513"/><path d="M15 0a15 15 0 0 1 13 7.500H15a7.500 7.500 0 0 0-6.500 11.200L2 7.500A15 15 0 0 1 15 0z" fill="#e33b2e"/><path d="M2 7.500l6.500 11.200A7.500 7.500 0 0 0 21 19.500L15 30A15 15 0 0 1 2 7.500z" fill="#2a9f49"/><circle cx="15" cy="15" r="7" fill="#fff"/><circle cx="15" cy="15" r="5.500" fill="#3f82ee"/></svg></button>
    <button class="run active" aria-label="Power BI Desktop"><svg width="30" height="30" viewBox="0 0 30 30"><path d="M0 0h30v30H0z" fill="#00b2c4"/><path d="M16 5h7v20h-7z" fill="#e0a400"/><path d="M11 10h7v15h-7z" fill="#f4c92a"/><path d="M6 15h7v10H6z" fill="#ffe07a"/></svg></button>
    <button class="run" aria-label="Report Builder"><svg width="30" height="30" viewBox="0 0 30 30"><path d="M2 4v14c0 3 14 3 14 0V4" fill="#ffd90a"/><ellipse cx="9" cy="4" rx="7" ry="3" fill="#f2a13c"/><path d="M20 2h7v6M1 22v5h6" fill="none" stroke="#3b9c3b" stroke-width="2.500"/><path d="M13 27l12-12M14 15l12 12" stroke="#a862cc" stroke-width="2.500"/><path d="M22 13l5 5M12 14l4-1" stroke="#a862cc" stroke-width="3"/></svg></button>
    <button class="run" aria-label="Settings"><svg width="24" height="24" viewBox="0 0 24 24"><circle cx="12" cy="12" r="6.500" fill="none" stroke="#444" stroke-width="3"/><circle cx="12" cy="12" r="10" fill="none" stroke="#444" stroke-width="4" stroke-dasharray="4 3.850"/></svg></button>
  </div>
  <div class="tray">
    <svg width="26" height="26"><circle cx="13" cy="13" r="13" fill="url(#sunG)"/></svg>
    <span class="temp">39°C&nbsp; Sunny</span>
    <svg width="16" height="9" class="up" viewBox="0 0 16 9"><path d="M1 8l7-7 7 7" fill="none" stroke="#111" stroke-width="1.600"/></svg>
    <svg width="20" height="12" viewBox="0 0 20 12"><path d="M1 1h16v10H1zM18 4h1v4h-1" fill="none" stroke="#111" stroke-width="1.500"/><path d="M3 3h7v6H3z" fill="#111"/></svg>
    <svg width="21" height="16" viewBox="0 0 21 16"><path d="M1 5h3l5-4v14l-5-4H1zM12 5q2 3 0 6M15 3q3 5 0 10M18 1q4 7 0 14" fill="none" stroke="#111" stroke-width="1.300"/></svg>
    <span>ENG</span>
    <time>5:10 PM<br>4/21/2025</time>
    <svg width="20" height="20" viewBox="0 0 20 20"><path d="M1 1h18v15h-6l-3 3-3-3H1z" fill="none" stroke="#111" stroke-width="1.500"/></svg>
  </div>
</footer>
</body>
</html>
```
FILE: styles.css
```css
* { box-sizing: border-box; }
body {
  margin: 0;
  min-height: 100vh;
  display: flex;
  flex-direction: column;
  font: 14px/20px "Open Sans", "Noto Sans", sans-serif;
  color: #252423;
  background: #fff;
}
button, input { font: inherit; color: inherit; }
button { background: none; border: 0; padding: 0; }
a { color: inherit; text-decoration: none; }
h1, h2, h3, h4, h5 { margin: 0; }
svg { display: block; flex: none; }
.defs { position: absolute; width: 0; height: 0; }

/* title bar */
.titlebar {
  height: 43px;
  display: grid;
  grid-template-columns: 823fr 500fr 597fr;
  grid-template-areas: "q s a";
  align-items: center;
  background: #3b3a37;
  color: #fff;
}
.quick { grid-area: q; display: flex; align-items: center; gap: 19px; padding-left: 20px; }
.doc { grid-area: q; display: flex; align-items: center; gap: 8px; margin: 6px 0 0 126px; white-space: nowrap; justify-self: start; }
.ln { fill: none; stroke: #e8e6e4; stroke-width: 1.5; }
.dim { opacity: .35; }
.search {
  grid-area: s;
  display: flex;
  align-items: center;
  gap: 13px;
  height: 30px;
  padding-left: 20px;
  background: #d4d4d1;
  border-radius: 2px;
  color: #3b3a37;
}
.search input { border: 0; background: none; outline: 0; padding: 0; width: 400px; font-size: 16px; }
.search input::placeholder { color: #1d5c4e; opacity: 1; }
.account { grid-area: a; display: flex; gap: 12px; align-items: center; justify-self: end; margin-right: 184px; }
.av { fill: #fff; stroke: #111; stroke-width: 1.8; }
.wincontrols { grid-area: a; display: flex; gap: 41px; align-items: center; justify-self: end; margin-right: 20px; }
.wc { fill: none; stroke: #fff; stroke-width: 1.4; }

/* menu */
.menu { display: flex; height: 45px; padding: 5px 7px 0 28px; gap: 39px; background: #fafafa; font-size: 16px; line-height: 30px; }
.menu a { height: 33px; padding: 0 1px 3px; }
.menu a:first-child { margin-right: 6px; }
.menu a.on { padding: 0; font-weight: 600; border-bottom: 3px solid #117865; }
.share {
  margin-left: auto;
  width: 105px;
  height: 30px;
  display: flex;
  align-items: center;
  justify-content: center;
  gap: 6px;
  background: #117865;
  color: #fff;
  border-radius: 4px;
  font-size: 14px;
}

/* ribbon */
.ribbon { display: flex; height: 112px; background: #fafafa; box-shadow: 0 1px 8px rgba(0, 0, 0, .18); z-index: 2; }
.group { display: flex; flex-direction: column; justify-content: space-between; height: 111px; border-right: 1px solid #d2d0ce; }
.group h2 { font-size: 12px; font-weight: 400; line-height: 16px; text-align: center; }
.tools { display: grid; grid-auto-flow: column; }
.clip .tools { padding-left: 5px; grid-template-columns: 60px 135px; }
.data .tools { padding: 0 14px 0 5px; grid-template-columns: 57px 68px 70px 49px 48px 73px 64px; }
.queries .tools { padding: 0 11px 0 10px; grid-template-columns: 71px 52px; }
.insert .tools { padding: 0 10px 0 9px; grid-template-columns: 50px 50px 63px; }
.calc .tools { padding: 0 9px 0 8px; grid-template-columns: 93px 58px 64px; }
.sens .tools { grid-template-columns: 91px; }
.pub .tools { grid-template-columns: 73px; }
.tool { display: flex; flex-direction: column; align-items: center; gap: 4px; padding-top: 5px; white-space: nowrap; justify-content: flex-start; }
.dis, .mini { color: #b8b6b4; }
.ct { display: inline-block; width: 9px; height: 6px; margin: 0 0 2px 1px; }
.cliplist { display: flex; flex-direction: column; gap: 10px; padding-top: 5px; }
.mini { display: flex; align-items: center; gap: 5px; height: 20px; }
.sc { fill: none; stroke: #a5cbe4; stroke-width: 1.5; }
.ic { stroke: #484644; stroke-width: 1.8; fill: none; }
.ic[fill="#fff"] { fill: #fff; }
.lt { stroke: #797775; }
.thin { stroke-width: 1.3; }
.fx { font: italic 24px "Liberation Serif", serif; fill: #a8a6a4; }
.fold { margin-left: auto; align-self: flex-end; padding: 0 7px 7px 0; }

/* workspace */
.work { flex: 1; display: flex; min-height: 0; }
.rail { width: 51px; background: #f3f2f1; border-right: 1px solid #e1dfdd; }
.rail button { width: 100%; height: 50px; display: flex; align-items: center; justify-content: center; border-left: 3px solid transparent; padding-right: 3px; }
.rail .on { border-color: #117865; }
.rl { fill: none; stroke: #797775; stroke-width: 1.4; }
.dax { font: bold 10px "Open Sans", sans-serif; fill: #605e5c; }
.center { flex: 1; display: flex; flex-direction: column; min-width: 0; }
.stage { flex: 1; display: flex; min-height: 0; }
.canvas { flex: 1; padding: 0 206px 8px 205px; min-width: 0; display: flex; }
.page {
  flex: 1;
  display: flex;
  flex-direction: column;
  min-width: 0;
  background: #e4e4e4;
  border: 2px dotted #555;
  border-top: 0;
  box-shadow: 0 0 14px rgba(0, 0, 0, .12);
}
.pagehead { display: flex; height: 55px; background: #fff; padding: 7px 25px 7px 5px; }
.pagehead h1 { width: 268px; overflow: hidden; white-space: nowrap; font-size: 27px; line-height: 36px; }
.years { display: grid; grid-template-columns: repeat(3, 1fr); gap: 2px; width: 337px; margin-left: 29px; }
.months { display: grid; grid-template-columns: repeat(12, 1fr); gap: 2px; flex: 1; margin: 9px 0 4px 37px; }
.years button, .months button { border: 1px solid #797775; color: #605e5c; font-size: 13px; background: #fff; }
.grid { flex: 1; display: grid; grid-template-columns: 201fr 716fr 382fr; column-gap: 9px; padding: 17px 9px 0 0; min-height: 0; }
.col { display: flex; flex-direction: column; gap: 15px; min-width: 0; min-height: 0; }
.mid, .last { padding-bottom: 13px; }
.last { padding-left: 5px; }
.card { background: #fff; min-width: 0; }
.top, .toprow { height: 190px; }
.toprow { display: grid; grid-template-columns: 193fr 249fr 250fr; column-gap: 12px; }
.kpi { margin-right: 8px; display: flex; flex-direction: column; align-items: center; justify-content: center; gap: 6px; padding-top: 13px; }
.kpi strong { font: 500 35px/40px Roboto, sans-serif; }
.kpi span { font-size: 16px; color: #605e5c; }
.card h4 { font: 400 17px/20px Roboto, sans-serif; padding: 1px 0 4px 6px; white-space: nowrap; }
.card h5 { font: 400 12px/14px Roboto, sans-serif; padding: 1px 0 1px 6px; white-space: nowrap; }
.chart { width: 100%; }
.gl { stroke: #c8c6c4; stroke-dasharray: 1 4; fill: none; }
.bar { fill: #118dff; }
.tk, .lg { font-size: 12px; fill: #605e5c; }
.lg { font-size: 13px; }
.lb { font-weight: 600; }
.end { text-anchor: end; }
.mdl { text-anchor: middle; }
.at { font: 15px Roboto, sans-serif; fill: #252423; }
.sm { font-size: 11px; }

/* slicers */
.slicer { padding: 5px 0 0 13px; }
.slicer h3 { display: flex; justify-content: space-between; padding-right: 14px; font: 500 15px/20px Roboto, sans-serif; }
.slicer h3 svg { margin-top: 4px; color: #797775; }
.slicer label { display: flex; align-items: center; gap: 8px; height: 30px; font-size: 16px; }
.slicer input { appearance: none; width: 18px; height: 18px; margin: 0; border: 1px solid #797775; background: #fff; }
.rest { flex: 1; display: flex; flex-direction: column; min-height: 0; padding-bottom: 5px; }
.scroll { flex: 1 1 0; min-height: 0; display: flex; justify-content: space-between; overflow: hidden; padding-right: 5px; }
.items { margin-top: 1px; }
.thumb { width: 9px; height: 320px; background: #8a8886; }

/* table */
.tablecard { flex: 1; display: flex; justify-content: space-between; padding: 0 5px 3px 6px; }
table { flex: 0 0 auto; width: calc(100% - 22px); border-collapse: collapse; font-size: 10px; line-height: 14px; }
th { height: 39px; font-size: 13px; font-weight: 400; text-align: left; border-bottom: 1px solid #5aa5ee; }
th:nth-child(1) { width: 158px; }
th:nth-child(2) { width: 84px; }
th:nth-child(3) { width: 259px; }
th:nth-child(4) { width: 124px; }
th, td { padding: 0 5px; white-space: nowrap; }
td { border-bottom: 1px solid #e6e6e6; }
tr:last-child td { border-bottom: 0; }
.n, td:nth-child(2), td:nth-child(5) { text-align: right; }
.tthumb { width: 7px; height: 67px; margin-top: 6px; border-radius: 4px; background: #b0b0b0; }

/* side panes */
.pane { width: 42px; display: flex; flex-direction: column; align-items: center; border-left: 1px solid #e1dfdd; padding-top: 16px; }
.pane h2 { writing-mode: vertical-rl; font-size: 18px; font-weight: 600; line-height: 20px; margin-top: 18px; }
.gray { background: #f3f2f1; }
.viz { width: 44px; }
.filters { border-color: #a19f9d; }
.filters > svg { margin-top: 18px; }
.filters h2 { font-size: 17px; margin-top: 10px; }

/* page tabs */
.pagetabs { display: flex; height: 44px; background: #f3f2f1; }
.views { width: 161px; display: flex; align-items: center; padding: 0 11px 8px 13px; border-right: 1px solid #8a8886; }
.views button { display: flex; justify-content: center; align-items: flex-end; width: 29px; height: 36px; padding-bottom: 4px; }
.views button + button { margin-left: 26px; }
.views .on { border-bottom: 3px solid #117865; padding-bottom: 6px; }
.views .arrow { width: 6px; padding-bottom: 8px; margin-left: 20px; }
.views .arrow + .arrow { margin-left: auto; }
.pagetabs a { position: relative; padding: 1px 26px 0 25px; line-height: 44px; background: #fff; border-right: 1px solid #c8c6c4; }
.pagetabs .on { font-weight: 600; border-right: 0; border-bottom: 5px solid #117865; }
.x { position: absolute; right: 5px; top: 2px; line-height: 20px; font-size: 12px; }
.plus { width: 48px; display: flex; justify-content: center; padding-top: 13px; background: #117865; }

/* status bar */
.status { height: 29px; display: flex; justify-content: space-between; align-items: center; padding: 2px 22px 0 5px; background: #f3f2f1; border-top: 1px solid #e1dfdd; color: #484644; }
.zoom { display: flex; align-items: center; gap: 7px; }
.zoom input { appearance: none; width: 126px; height: 14px; margin: 0; background: linear-gradient(#605e5c, #605e5c) center / 100% 1px no-repeat; }
.zoom input::-webkit-slider-thumb { appearance: none; width: 5px; height: 13px; background: #605e5c; }
.pct { margin: 0 16px 0 8px; }

/* task bar */
.taskbar {
  height: 51px;
  display: flex;
  align-items: center;
  border-top: 1px solid #000;
  color: #111;
  background: linear-gradient(90deg, #d4dcea 0, #d8dceb 22%, #eedfd7 26%, #e4dadc 35%, #f0d9ea 43%, #e9dce6 50%, #ded5df 62%, #f2e0e2 70%, #f0dfdf 74%, #d6dfd0 77%, #eadcc8 82%, #eadecb 90%, #e0dfb2 96%, #e2df9e 100%);
}
.start { width: 60px; display: flex; justify-content: center; }
.tsearch { width: 360px; height: 49px; display: flex; align-items: center; gap: 15px; padding-left: 14px; background: #fff; border: 1px solid #c8c6c4; }
.tsearch input { width: 206px; border: 0; padding: 0; outline: 0; background: none; font-size: 18px; }
.tsearch input::placeholder { color: #333; opacity: 1; }
.apps { display: flex; height: 50px; }
.apps button { width: 62px; display: flex; align-items: center; justify-content: center; }
.apps .run { border-bottom: 3px solid #00b2c4; padding-top: 3px; }
.apps .active { background: #f7f1ef; }
.apps .run + .run { width: 51px; margin: 0 5px 0 6px; }
.tray { margin-left: auto; display: flex; align-items: center; padding-right: 31px; }
.temp { font-size: 16px; margin-left: 12px; }
.up { margin: 0 17px 0 31px; }
.tray svg + svg { margin-right: 12px; }
time { text-align: center; line-height: 24px; margin: 0 24px 0 15px; }
```
